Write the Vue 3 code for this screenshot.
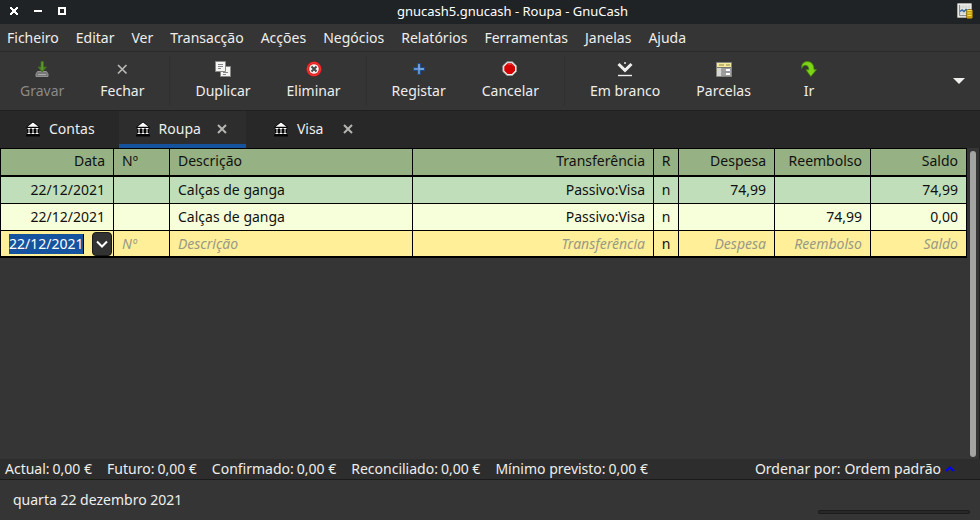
<script setup>
import { ref } from 'vue'

const menus = ['Ficheiro', 'Editar', 'Ver', 'Transacção', 'Acções', 'Negócios', 'Relatórios', 'Ferramentas', 'Janelas', 'Ajuda']

const toolGroups = [
  [{ id: 'save', label: 'Gravar', disabled: true }, { id: 'close', label: 'Fechar' }],
  [{ id: 'copy', label: 'Duplicar' }, { id: 'delete', label: 'Eliminar' }],
  [{ id: 'plus', label: 'Registar' }, { id: 'stop', label: 'Cancelar' }],
  [{ id: 'blank', label: 'Em branco' }, { id: 'split', label: 'Parcelas' }, { id: 'jump', label: 'Ir' }],
]

const tabs = [
  { label: 'Contas', closable: false },
  { label: 'Roupa', closable: true },
  { label: 'Visa', closable: true },
]
const activeTab = ref('Roupa')

const columns = [
  { key: 'date', label: 'Data', end: true },
  { key: 'num', label: 'Nº' },
  { key: 'desc', label: 'Descrição' },
  { key: 'transfer', label: 'Transferência', end: true },
  { key: 'rec', label: 'R', mid: true },
  { key: 'debit', label: 'Despesa', end: true },
  { key: 'credit', label: 'Reembolso', end: true },
  { key: 'balance', label: 'Saldo', end: true },
]

const rows = [
  { date: '22/12/2021', num: '', desc: 'Calças de ganga', transfer: 'Passivo:Visa', rec: 'n', debit: '74,99', credit: '', balance: '74,99' },
  { date: '22/12/2021', num: '', desc: 'Calças de ganga', transfer: 'Passivo:Visa', rec: 'n', debit: '', credit: '74,99', balance: '0,00' },
]

const draft = ref({ date: '22/12/2021', num: '', desc: '', transfer: '', rec: 'n', debit: '', credit: '', balance: '' })

const totals = [
  ['Actual:', '0,00 €'],
  ['Futuro:', '0,00 €'],
  ['Confirmado:', '0,00 €'],
  ['Reconciliado:', '0,00 €'],
  ['Mínimo previsto:', '0,00 €'],
]
</script>

<template>
  <div class="window">
    <header class="titlebar">
      <div class="window-buttons">
        <button type="button" aria-label="Fechar janela">
          <svg viewBox="0 0 8 8" width="8" height="8" shape-rendering="crispEdges"><path d="M0 0h2v1h1v1h2V1h1V0h2v2H7v1H6v2h1v1h1v2H6V7H5V6H3v1H2v1H0V6h1V5h1V3H1V2H0z" fill="#fff" /></svg>
        </button>
        <button type="button" aria-label="Minimizar">
          <svg viewBox="0 0 8 8" width="8" height="8"><path d="M0 3h8v2H0z" fill="#fff" /></svg>
        </button>
        <button type="button" aria-label="Maximizar">
          <svg viewBox="0 0 8 8" width="8" height="8"><path d="M1 1h6v6H1z" fill="none" stroke="#fff" stroke-width="2" /></svg>
        </button>
      </div>
      <h1>gnucash5.gnucash - Roupa - GnuCash</h1>
      <svg class="app-icon" viewBox="0 0 16 16" width="16" height="16">
        <rect x=".5" y=".5" width="14" height="14" rx=".5" fill="#e9e9e6" stroke="#aaa9a5" />
        <path d="M3 2v11h10M6 2v11M9 2v11M12 2v11M3 4h10M3 10h10" stroke="#c9c9c6" fill="none" stroke-width=".7" />
        <path d="M2.500 2v10.500H10" fill="none" stroke="#8d8d8a" />
        <path d="M3 8.500l2-1.500 2 1.500 2-2 1 1" fill="none" stroke="#3465a4" stroke-width="1.500" />
        <path d="M10.500 6.500h4l1 1v7l-1 1h-4l-1-1v-7z" fill="#c9a00a" stroke="#8a6a05" stroke-width=".8" />
        <path d="M10.500 7.500h4M10.500 10h4M10.500 12.500h4" stroke="#f5df58" />
      </svg>
    </header>

    <nav class="menubar">
      <button v-for="m in menus" :key="m" type="button">{{ m }}</button>
    </nav>

    <div class="toolbar">
      <div v-for="(group, gi) in toolGroups" :key="gi" class="tool-group">
        <button v-for="t in group" :key="t.id" type="button" class="tool" :disabled="t.disabled">
          <svg viewBox="0 0 16 16" width="16" height="16">
            <g v-if="t.id === 'save'">
              <path d="M3.500 10.500h9l1.500 2.500v2.500H2V13z" fill="#777" stroke="#929292" />
              <path d="M4 13.500h8" stroke="#aaa" />
              <path d="M7 .5h2.500V6H12.500L8.200 11 4 6h3z" fill="#4f8424" stroke="#3f6f1b" stroke-width=".8" />
              <path d="M8.200 1v8" stroke="#6aa038" />
            </g>
            <path v-else-if="t.id === 'close'" d="M4 4l8.500 8.500M12.500 4L4 12.500" stroke="#b9b9b6" stroke-width="1.700" />
            <g v-else-if="t.id === 'copy'">
              <path d="M5.500 5.500h10v10h-10z" fill="#f4f4f2" stroke="#888a85" />
              <path d="M8 11.500h5M8 13.500h3" stroke="#888" />
              <path d="M.5.500h10v10H.500z" fill="#f4f4f2" stroke="#888a85" />
              <path d="M3 3.500h5M3 5.500h5M3 7.500h3" stroke="#888" />
            </g>
            <g v-else-if="t.id === 'delete'">
              <circle cx="8" cy="8" r="7.600" fill="#df1717" />
              <circle cx="8" cy="8" r="6.300" fill="none" stroke="#ff4b4b" stroke-width=".8" />
              <circle cx="8" cy="8" r="4.800" fill="#f4f4f2" />
              <path d="M5.500 5.500l5 5M10.500 5.500l-5 5" stroke="#454845" stroke-width="2" />
            </g>
            <g v-else-if="t.id === 'plus'">
              <path d="M6.500 2.500h3v4h4v3h-4v4h-3v-4h-4v-3h4z" fill="#5f92cd" stroke="#204a87" />
              <path d="M8 3.500v5M8 8h5" fill="none" stroke="#8db6e2" stroke-width=".8" />
            </g>
            <g v-else-if="t.id === 'stop'">
              <path d="M5 .8h5.400L14.500 4.800v5.600L10.400 14.500H5L.8 10.400V4.800z" fill="#f0f0ee" stroke="#9a9a98" stroke-width=".8" />
              <path d="M5.600 2.300h4.200L13 5.500v4.300L9.800 13H5.600L2.300 9.800V5.500z" fill="#d40000" />
              <path d="M5.800 3.300h3.800L11.500 5" fill="none" stroke="#ef3535" />
            </g>
            <g v-else-if="t.id === 'blank'">
              <path d="M1.500 3L8 9.300 14.500 3" fill="none" stroke="#eeeeec" stroke-width="3" />
              <path d="M1 14.500h14" stroke="#eeeeec" stroke-width="1.400" />
              <rect x="7" y="1" width="2" height="2" fill="#bbb" />
            </g>
            <g v-else-if="t.id === 'split'">
              <path d="M.5 1.500h15v14H.500z" fill="#d6d6d2" stroke="#85857e" />
              <path d="M1 2h14v4H1z" fill="#f2e99a" />
              <path d="M3 4h5M10 4h4" stroke="#8f874b" />
              <path d="M1 6.500h14" stroke="#77776f" />
              <path d="M5.500 7.500h9v3h-9zM5.500 11.500h9v3h-9z" fill="#fff" stroke="#999" />
              <path d="M6 9h4M6 13h4" stroke="#444" />
            </g>
            <path v-else d="M.8 7.500C0 3 3 .6 6.300.6c4.500 0 6.700 3.400 6.700 8h2.500L9.800 15.500 5 8.800h2.800C8 5.800 6.500 4.300 4.500 4.300 2.700 4.300 1.500 5.500.8 7.500z" fill="#7fd317" stroke="#418a08" stroke-width=".8" />
          </svg>
          <span>{{ t.label }}</span>
        </button>
      </div>
      <button type="button" class="overflow" aria-label="Mais ferramentas">
        <svg viewBox="0 0 12 6" width="12" height="6"><path d="M0 0h12L6 6z" fill="#eeeeec" /></svg>
      </button>
    </div>

    <div class="tabs">
      <div v-for="t in tabs" :key="t.label" class="tab" :class="{ active: t.label === activeTab }">
        <button type="button" class="tab-label" @click="activeTab = t.label">
          <svg viewBox="0 0 14 16" width="14" height="16">
            <path d="M7 .5l6.500 5.200v1.800H13v6h1v2H0v-2h1v-6H.500V5.700z" fill="#050505" />
            <path d="M7 1.500l5.500 4.200H1.500z" fill="#fff" />
            <path d="M1.500 7.500h3M5.500 7.500h3M9.500 7.500h3M3 8v5M7 8v5M11 8v5M1.500 12.500h3M5.500 12.500h3M9.500 12.500h3" stroke="#fff" fill="none" />
          </svg>
          {{ t.label }}
        </button>
        <button v-if="t.closable" type="button" class="tab-close" :aria-label="'Fechar ' + t.label">
          <svg viewBox="0 0 10 10" width="10" height="10"><path d="M1 1l8 8M9 1L1 9" stroke="#b5b5b2" stroke-width="2" /></svg>
        </button>
      </div>
    </div>

    <main class="register">
      <div class="sheet">
        <table>
          <colgroup>
            <col v-for="c in columns" :key="c.key" :class="'col-' + c.key">
          </colgroup>
          <thead>
            <tr>
              <th v-for="c in columns" :key="c.key" scope="col" :class="{ end: c.end, mid: c.mid }">{{ c.label }}</th>
            </tr>
          </thead>
          <tbody>
            <tr v-for="(r, i) in rows" :key="i">
              <td v-for="c in columns" :key="c.key" :class="{ end: c.end, mid: c.mid }">{{ r[c.key] }}</td>
            </tr>
            <tr class="draft">
              <td v-for="c in columns" :key="c.key" :class="{ end: c.end, mid: c.mid, picker: c.key === 'date' }">
                <div v-if="c.key === 'date'" class="date-edit">
                  <input v-model="draft.date" class="date" type="text" aria-label="Data">
                  <button type="button" aria-label="Abrir calendário">
                    <svg viewBox="0 0 12 8" width="12" height="8"><path d="M1 1.500l5 5 5-5" fill="none" stroke="#fff" stroke-width="2" /></svg>
                  </button>
                </div>
                <input v-else v-model="draft[c.key]" type="text" :placeholder="c.label" :aria-label="c.label">
              </td>
            </tr>
          </tbody>
        </table>
      </div>
      <div class="scroll"><div class="thumb"></div></div>
    </main>

    <div class="summary">
      <span v-for="[name, value] in totals" :key="name" class="pair"><span>{{ name }}</span><span>{{ value }}</span></span>
      <span class="pair sort">
        <span>Ordenar por:</span><span>Ordem padrão</span>
        <svg viewBox="0 0 10 6" width="10" height="6"><path d="M1 5l4-3.500L9 5" fill="none" stroke="#00f" stroke-width="2" /></svg>
      </span>
    </div>

    <footer class="statusbar">
      <span>quarta 22 dezembro 2021</span>
      <div class="progress"></div>
    </footer>
  </div>
</template>

<style>
body {
  background: #353535;
}
</style>

<style scoped>
.window {
  display: flex;
  flex-direction: column;
  min-height: 100vh;
  background: #353535;
  color: #eeeeec;
  font: 14px/20px "Noto Sans", sans-serif;
}
.window * {
  box-sizing: border-box;
}
button,
input {
  margin: 0;
  padding: 0;
  border: 0;
  background: none;
  color: inherit;
  font: inherit;
}
svg {
  display: block;
  flex: none;
}
.titlebar {
  display: flex;
  align-items: center;
  height: 24px;
  padding: 0 7px 2px 10px;
  background: #1f2325;
  color: #fff;
}
.window-buttons {
  display: flex;
  gap: 16px;
}
.titlebar h1 {
  flex: 1;
  margin: 0;
  padding-left: 2px;
  font-size: 13px;
  font-weight: 400;
  text-align: center;
}
.menubar {
  display: flex;
  gap: 17px;
  height: 28px;
  padding: 0 7px;
  border-bottom: 1px solid #2b2b2b;
}
.toolbar {
  display: flex;
  height: 59px;
  padding: 4px 15px 4px 5px;
  border-bottom: 1px solid #202020;
}
.tool-group {
  display: flex;
  gap: 6px;
}
.tool-group + .tool-group {
  margin-left: 10px;
  padding-left: 10px;
  border-left: 1px solid #303030;
}
.tool {
  display: flex;
  flex-direction: column;
  align-items: center;
  gap: 4px;
  min-width: 74px;
  padding: 5px 15px 0;
}
.tool:disabled {
  color: #8a8a88;
}
.overflow {
  margin-left: auto;
}
.tabs {
  display: flex;
  height: 37px;
  background: #282828;
}
.tab {
  display: flex;
  align-items: center;
  gap: 16px;
  padding: 2px 19px 0 17px;
  border-bottom: 4px solid transparent;
}
.tab:first-child {
  padding-right: 24px;
  padding-left: 26px;
}
.tab:last-child {
  gap: 20px;
  padding-left: 28px;
}
.tab.active {
  border-bottom-color: #15539e;
  background: #2d2d2d;
}
.tab-label {
  display: flex;
  align-items: center;
  gap: 9px;
}
.register {
  display: flex;
  flex: 1;
}
.sheet {
  flex: 1;
}
table {
  width: 100%;
  border-collapse: separate;
  border-spacing: 0;
  border-top: 1px solid #000;
  border-left: 1px solid #000;
  table-layout: fixed;
  color: #111;
}
.col-date { width: 113px; }
.col-num { width: 56px; }
.col-transfer { width: 241px; }
.col-rec { width: 25px; }
.col-debit,
.col-credit,
.col-balance { width: 96px; }
th,
td {
  height: 27px;
  padding: 0 8px;
  border-right: 1px solid #000;
  border-bottom: 1px solid #000;
  font-weight: 400;
  text-align: left;
}
th {
  height: 28px;
  padding-bottom: 2px;
  border-bottom-width: 2px;
  background: #96b183;
}
tbody tr:nth-child(odd) {
  background: #bfdeb9;
}
tbody tr:nth-child(even) {
  background: #f6ffda;
}
tbody tr.draft {
  background: #ffef98;
}
.draft td {
  border-bottom-width: 2px;
}
.end,
.end input {
  text-align: right;
}
.mid {
  padding-right: 0;
  padding-left: 0;
  text-align: center;
}
.mid input {
  text-align: center;
}
td input {
  display: block;
  width: 100%;
  height: 20px;
}
input::placeholder {
  color: #999a86;
  font-style: italic;
  opacity: 1;
}
.picker {
  padding: 0 1px 0 8px;
}
.date-edit {
  display: flex;
  align-items: center;
  justify-content: space-between;
}
.date-edit .date {
  width: 75px;
  border-right: 1px solid #000;
  background: #15539e;
  color: #fff;
}
.date-edit button {
  display: grid;
  place-items: center;
  width: 20px;
  height: 24px;
  border: 1px solid #1b1b1b;
  border-radius: 4px;
  background: #323232;
}
.scroll {
  display: flex;
  width: 13px;
  padding: 3px 3px 2px;
  border-right: 1px solid #202020;
}
.thumb {
  flex: 1;
  border-radius: 3px;
  background: #a4a4a2;
}
.summary {
  display: flex;
  gap: 15px;
  height: 21px;
  padding: 0 25px 0 5px;
  border-bottom: 1px solid #1b1b1b;
  background: #2d2d2d;
}
.pair {
  display: flex;
  align-items: center;
  gap: 3px;
}
.sort {
  gap: 4px;
  margin-left: auto;
}
.statusbar {
  display: flex;
  align-items: center;
  justify-content: space-between;
  height: 40px;
  padding: 0 10px 0 13px;
}
.progress {
  align-self: flex-end;
  width: 152px;
  height: 4px;
  margin-bottom: 6px;
  border: 1px solid #1b1b1b;
  border-radius: 2px;
  background: #282828;
}
</style>
